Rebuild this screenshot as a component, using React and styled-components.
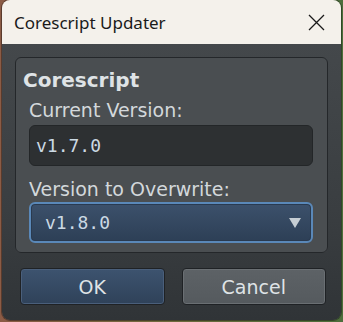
import React from "react";
import styled, { createGlobalStyle } from "styled-components";

const Global = createGlobalStyle`
  html, body {
    margin: 0;
    padding: 0;
    width: 343px;
    height: 322px;
    overflow: hidden;
    background: linear-gradient(90deg, #8b5b45 0%, #6f6a3e 50%, #4d6e3c 100%);
  }
`;

const Window = styled.div`
  margin: 0 2px;
  width: 339px;
  height: 320px;
  border-radius: 8px;
  overflow: hidden;
  display: flex;
  flex-direction: column;
  box-shadow: 0 0 0 1px rgba(0, 0, 0, 0.35);
`;

const TitleBar = styled.div`
  height: 44px;
  flex: none;
  background: #f4f1eb;
  display: flex;
  align-items: center;
  justify-content: space-between;
  padding: 0 16px 0 12px;
  font-family: "Noto Sans", "Open Sans", sans-serif;
  font-size: 17px;
  color: #1a1a1a;
`;

const Body = styled.div`
  flex: 1;
  background: linear-gradient(180deg, #44484b 0%, #3a3e41 60%, #303437 100%);
  padding: 13px 13px 0 13px;
  display: flex;
  flex-direction: column;
  font-family: "DejaVu Sans", sans-serif;
  color: #d8dde0;
`;

const Group = styled.fieldset`
  margin: 0;
  height: 196px;
  box-sizing: border-box;
  border: 1px solid #24272a;
  border-radius: 6px;
  background: #4a4e51;
  padding: 10px 14px 0 13px;
  display: flex;
  flex-direction: column;
`;

const GroupTitle = styled.div`
  font-weight: bold;
  font-size: 20px;
  line-height: 24px;
  margin-left: -6px;
  color: #dfe3e6;
`;

const Label = styled.div`
  font-size: 19px;
  line-height: 22px;
  margin-top: ${(p) => p.$top}px;
  color: #d3d8db;
`;

const Field = styled.div`
  margin-top: ${(p) => p.$top}px;
  height: 41px;
  box-sizing: border-box;
  border-radius: 6px;
  display: flex;
  align-items: center;
  justify-content: space-between;
  padding: 0 10px 0 ${(p) => (p.$select ? 14 : 6)}px;
  font-family: "DejaVu Sans Mono", monospace;
  font-size: 18px;
  color: #cbd9e4;
  background: ${(p) =>
    p.$select ? "linear-gradient(180deg, #3c516b 0%, #2d3f56 100%)" : "#2d3032"};
  border: ${(p) => (p.$select ? "2px solid #5a88b8" : "1px solid #232628")};
  box-shadow: ${(p) => (p.$select ? "inset 0 0 0 1px #2a3a4f" : "none")};
`;

const Arrow = styled.div`
  width: 0;
  height: 0;
  border-left: 6px solid transparent;
  border-right: 6px solid transparent;
  border-top: 10px solid #c5cdd3;
`;

const Buttons = styled.div`
  display: flex;
  gap: 17px;
  margin-top: 15px;
  padding: 0 2px 0 5px;
`;

const Button = styled.button`
  flex: 1;
  height: 37px;
  border-radius: 4px;
  border: 1px solid #1f2225;
  font-family: "DejaVu Sans", sans-serif;
  font-size: 19px;
  color: #dfe3e6;
  box-shadow: inset 0 0 0 1px ${(p) => (p.$primary ? "#4a5f7b" : "#6a6f73")};
  background: ${(p) =>
    p.$primary
      ? "linear-gradient(180deg, #3d536f 0%, #2f4259 100%)"
      : "linear-gradient(180deg, #5d6266 0%, #555a5e 100%)"};
`;

const Close = () => (
  <svg width="17" height="17" viewBox="0 0 17 17">
    <path d="M1 1 L16 16 M16 1 L1 16" stroke="#1a1a1a" strokeWidth="1.3" fill="none" />
  </svg>
);

export default function App() {
  return (
    <>
      <Global />
      <Window>
        <TitleBar>
          <span>Corescript Updater</span>
          <Close />
        </TitleBar>
        <Body>
          <Group>
            <GroupTitle>Corescript</GroupTitle>
            <Label $top={7}>Current Version:</Label>
            <Field $top={4}>v1.7.0</Field>
            <Label $top={12}>Version to Overwrite:</Label>
            <Field $select $top={2}>
              <span>v1.8.0</span>
              <Arrow />
            </Field>
          </Group>
          <Buttons>
            <Button $primary>OK</Button>
            <Button>Cancel</Button>
          </Buttons>
        </Body>
      </Window>
    </>
  );
}
